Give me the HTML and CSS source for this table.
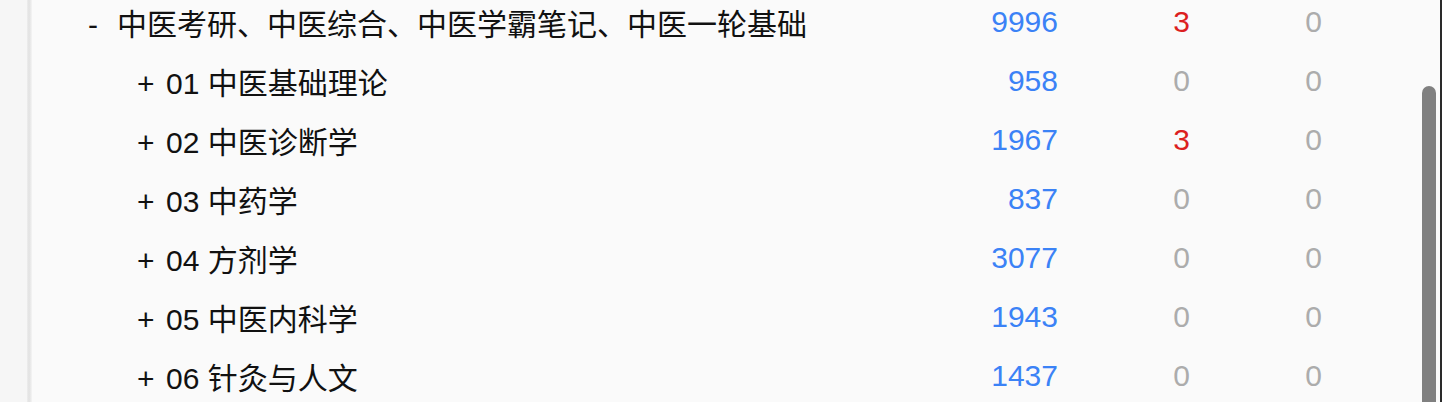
FILE: index.html
```html
<!DOCTYPE html>
<html lang="zh">
<head>
<meta charset="utf-8">
<title>Decks</title>
<link rel="stylesheet" href="styles.css">
</head>
<body>
<div class="page">
  <div class="side"></div>
  <div class="edge"></div>
  <main class="main">
    <div class="decks">
      <div class="row">
        <div class="name"><span class="toggle">-</span>中医考研、中医综合、中医学霸笔记、中医一轮基础</div>
        <div class="num new">9996</div>
        <div class="num lrn">3</div>
        <div class="num zero">0</div>
      </div>
      <div class="row">
        <div class="name child"><span class="toggle">+</span>01 中医基础理论</div>
        <div class="num new">958</div>
        <div class="num zero">0</div>
        <div class="num zero">0</div>
      </div>
      <div class="row">
        <div class="name child"><span class="toggle">+</span>02 中医诊断学</div>
        <div class="num new">1967</div>
        <div class="num lrn">3</div>
        <div class="num zero">0</div>
      </div>
      <div class="row">
        <div class="name child"><span class="toggle">+</span>03 中药学</div>
        <div class="num new">837</div>
        <div class="num zero">0</div>
        <div class="num zero">0</div>
      </div>
      <div class="row">
        <div class="name child"><span class="toggle">+</span>04 方剂学</div>
        <div class="num new">3077</div>
        <div class="num zero">0</div>
        <div class="num zero">0</div>
      </div>
      <div class="row">
        <div class="name child"><span class="toggle">+</span>05 中医内科学</div>
        <div class="num new">1943</div>
        <div class="num zero">0</div>
        <div class="num zero">0</div>
      </div>
      <div class="row">
        <div class="name child"><span class="toggle">+</span>06 针灸与人文</div>
        <div class="num new">1437</div>
        <div class="num zero">0</div>
        <div class="num zero">0</div>
      </div>
    </div>
  </main>
  <div class="track"><div class="thumb"></div></div>
  <div class="frame"></div>
</div>
</body>
</html>
```

FILE: styles.css
```css
html, body {
  margin: 0;
  padding: 0;
  height: 100%;
  overflow: hidden;
}
body {
  font-family: "Liberation Sans", Arial, "Noto Sans CJK SC", sans-serif;
  color: #111;
  background: #fafafa;
}
.page {
  display: flex;
  height: 402px;
}
.side {
  width: 27px;
  background: #f6f6f6;
}
.edge {
  width: 5px;
  background: linear-gradient(to right, #ededed, #e2e2e2 40%, #ececec 80%, #f6f6f6);
}
.main {
  flex: 1;
  background: #fafafa;
  overflow: hidden;
}
.decks {
  margin-top: -8px;
  padding-left: 56px;
}
.row {
  display: grid;
  grid-template-columns: 1fr 120px 132px 132px;
  height: 59px;
  align-items: center;
  font-size: 30px;
  padding-right: 96px;
}
.name {
  white-space: nowrap;
  color: #111;
}
.name.child {
  padding-left: 49px;
}
.toggle {
  display: inline-block;
  width: 29px;
}
.num {
  text-align: right;
}
.num.new {
  color: #3b82f6;
}
.num.lrn {
  color: #dc1f1f;
}
.num.zero {
  color: #acacac;
}
.track {
  width: 22px;
  background: #fafafa;
  display: flex;
  padding-left: 4px;
  box-sizing: border-box;
}
.thumb {
  width: 14px;
  margin-top: 86px;
  background: #808080;
  border-radius: 7px 7px 0 0;
}
.frame {
  width: 2px;
  background: #2a2a2a;
}
```
